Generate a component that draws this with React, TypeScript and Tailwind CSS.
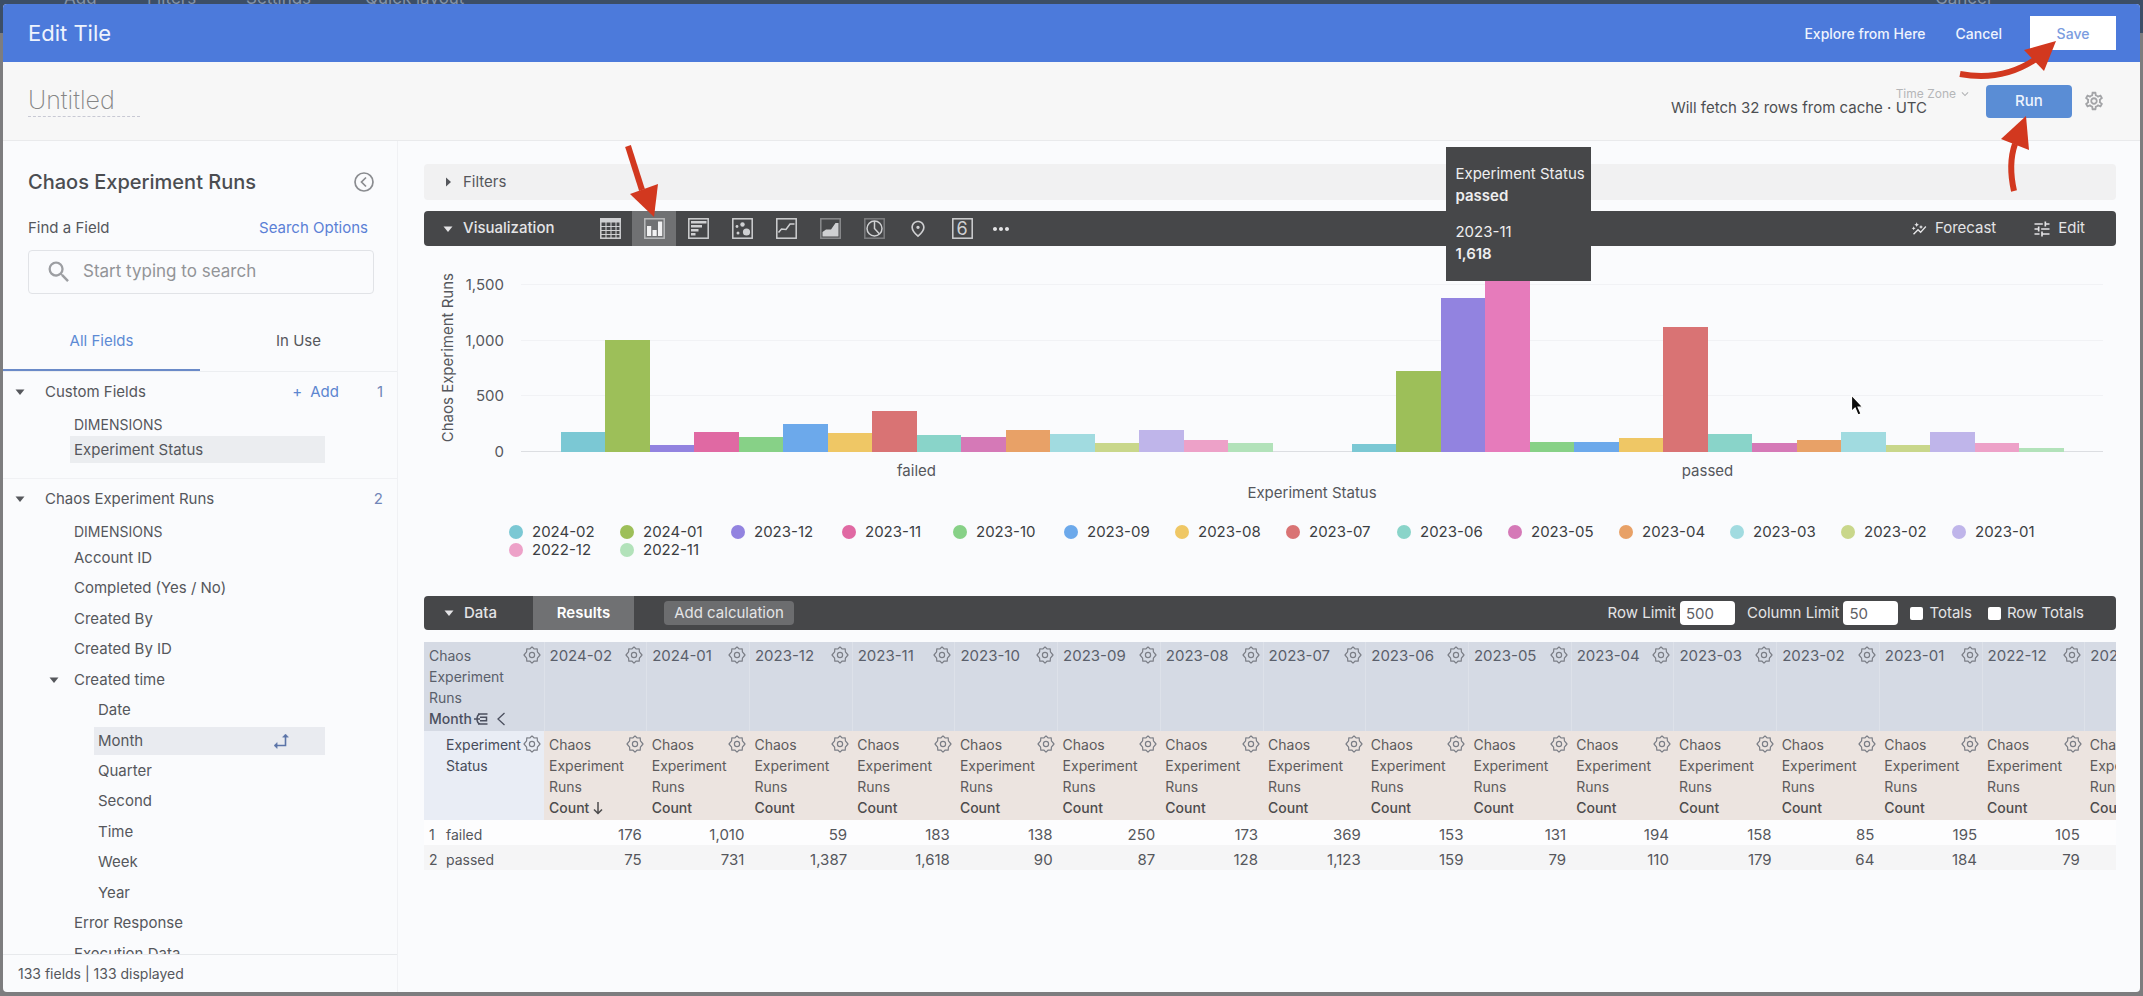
import React, { useState } from "react";
import { MdAutoGraph, MdExpandMore, MdMoreHoriz, MdOutlinePlace, MdOutlineSettings, MdSearch, MdTune } from "react-icons/md";

const months = [
  { label: "2024-02", color: "#7bc8d4", failed: 176, passed: 75 },
  { label: "2024-01", color: "#9dbf59", failed: 1010, passed: 731 },
  { label: "2023-12", color: "#9283e0", failed: 59, passed: 1387 },
  { label: "2023-11", color: "#e069a3", failed: 183, passed: 1618 },
  { label: "2023-10", color: "#87d187", failed: 138, passed: 90 },
  { label: "2023-09", color: "#6ca9eb", failed: 250, passed: 87 },
  { label: "2023-08", color: "#efc765", failed: 173, passed: 128 },
  { label: "2023-07", color: "#d97374", failed: 369, passed: 1123 },
  { label: "2023-06", color: "#89d4c9", failed: 153, passed: 159 },
  { label: "2023-05", color: "#d579b7", failed: 131, passed: 79 },
  { label: "2023-04", color: "#e8a167", failed: 194, passed: 110 },
  { label: "2023-03", color: "#a1dbe0", failed: 158, passed: 179 },
  { label: "2023-02", color: "#c9d78b", failed: 85, passed: 64 },
  { label: "2023-01", color: "#bfb5ea", failed: 195, passed: 184 },
  { label: "2022-12", color: "#eda1c8", failed: 105, passed: 79 },
  { label: "2022-11", color: "#b2e2ba", failed: 80, passed: 32 },
];

const statuses = ["failed", "passed"] as const;
const ticks = [1500, 1000, 500, 0];
const CHART_MAX = 1800;

const fields = [
  { name: "Account ID" },
  { name: "Completed (Yes / No)" },
  { name: "Created By" },
  { name: "Created By ID" },
  { name: "Created time", group: true },
  { name: "Date", nested: true },
  { name: "Month", nested: true, pivot: true },
  { name: "Quarter", nested: true },
  { name: "Second", nested: true },
  { name: "Time", nested: true },
  { name: "Week", nested: true },
  { name: "Year", nested: true },
  { name: "Error Response" },
  { name: "Execution Data" },
];

function Caret({ right = false }: { right?: boolean }) {
  return (
    <svg viewBox="0 0 10 10" className="w-2.5 h-2.5 shrink-0" fill="currentColor">
      {right ? <path d="M3 0.5 8 5 3 9.5z" /> : <path d="M0.5 2.5h9L5 8z" />}
    </svg>
  );
}

function Gear() {
  return (
    <svg viewBox="0 0 18 18" className="w-[18px] h-[18px]" fill="none" stroke="currentColor" strokeWidth="1.2" strokeLinejoin="round">
      <path d="M9 0.9 11.2 3l3-.2.2 3L17 9l-2.6 3.2-.2 3-3-.2L9 17.1 6.8 15l-3 .2-.2-3L1 9l2.6-3.2.2-3 3 .2z" />
      <circle cx="9" cy="9" r="2.6" />
    </svg>
  );
}

function GearButton({ label }: { label: string }) {
  return (
    <button aria-label={label} className="absolute right-[3px] top-1 text-[#7b7e86]">
      <Gear />
    </button>
  );
}

function PivotIcon() {
  return (
    <svg viewBox="0 0 16 16" className="w-4 h-4" fill="none" stroke="#5b74a8" strokeWidth="1.6">
      <path d="M12.5 2v10.5H2" />
      <path d="M9.5 4.2 12.5 1l3 3.2zM4.2 9.5 1 12.5l3.2 3z" fill="#5b74a8" strokeWidth="0.4" />
    </svg>
  );
}

const frame = <rect x="0.8" y="0.8" width="19.4" height="19.4" />;

const vizTypes = [
  {
    name: "Table",
    icon: (
      <>
        {frame}
        <path d="M0 0h21v4.5H0z" fill="currentColor" stroke="none" />
        <path d="M1 8.5h19M1 12.5h19M1 16.5h19M6 4v16M11 4v16M16 4v16" strokeWidth="1.1" />
      </>
    ),
  },
  {
    name: "Column",
    icon: (
      <>
        {frame}
        <path d="M3 8h4.2v10H3zM8.500 12h4.2v6H8.500zM14 3.500h4.2V18H14z" fill="#f1f1f2" stroke="none" />
      </>
    ),
  },
  {
    name: "Bar",
    icon: (
      <>
        {frame}
        <path d="M3 3h15.5v2.4H3zM3 7h11v2.4H3zM3 11h7.5v2.4H3zM3 15h4.5v2.4H3z" fill="currentColor" stroke="none" />
      </>
    ),
  },
  {
    name: "Scatterplot",
    icon: (
      <>
        {frame}
        <g fill="currentColor" stroke="none">
          <circle cx="10.5" cy="6.5" r="2.2" />
          <circle cx="5" cy="8.5" r="1.4" />
          <circle cx="6" cy="15" r="1.5" />
          <circle cx="14.5" cy="14" r="3.6" />
        </g>
      </>
    ),
  },
  {
    name: "Line",
    icon: (
      <>
        {frame}
        <path d="M2.5 14.5 5.5 11l4.5.5 4-5.5h4.500" />
      </>
    ),
  },
  {
    name: "Area",
    icon: (
      <>
        <rect x="0.8" y="0.8" width="19.4" height="19.4" opacity="0.5" />
        <path d="M2.5 18.5V14L6 11.5h5L15.500 5h3v13.500z" fill="currentColor" stroke="none" />
      </>
    ),
  },
  {
    name: "Pie",
    icon: (
      <>
        <rect x="0.8" y="0.8" width="19.4" height="19.4" opacity="0.4" />
        <circle cx="10.5" cy="10.5" r="7.5" />
        <path d="M10.5 3v7.5l5 5.5" />
      </>
    ),
  },
  { name: "Map", icon: null },
  { name: "Single Value", icon: frame },
];

function FieldPicker() {
  const [tab, setTab] = useState("All Fields");

  return (
    <aside className="w-[395px] shrink-0 flex flex-col border-r border-[#f0f1f4] min-h-0">
      <div className="pl-[25px] pr-[23px] pt-[23px]">
        <div className="flex items-center justify-between h-9">
          <h2 className="text-[20px] font-medium text-[#4b4d51]">Chaos Experiment Runs</h2>
          <button aria-label="Collapse field picker" className="text-[#8a8c90]">
            <svg viewBox="0 0 20 20" className="w-5 h-5" fill="none" stroke="currentColor" strokeWidth="1.7">
              <circle cx="10" cy="10" r="9" />
              <path d="M12 5.5 7.5 10l4.5 4.5" />
            </svg>
          </button>
        </div>
        <div className="flex items-center justify-between mt-3.5 pr-1.5 h-7">
          <label htmlFor="field-search">Find a Field</label>
          <a href="#search-options" className="text-[#5b80d6]">Search Options</a>
        </div>
        <div className="mt-2 flex items-center h-11 border border-[#e1e3e7] rounded px-4">
          <MdSearch className="w-7 h-7 text-[#9c9ea2] shrink-0" />
          <input
            id="field-search"
            placeholder="Start typing to search"
            className="ml-2.5 w-full bg-transparent text-[17px] placeholder:text-[#929497] outline-none"
          />
        </div>
      </div>

      <div className="mt-5 flex border-b border-[#eceef1]">
        {["All Fields", "In Use"].map((name) => (
          <button
            key={name}
            onClick={() => setTab(name)}
            className={
              tab === name
                ? "flex-1 h-[57px] border-b-2 border-[#6a8ac8] text-[#5d8ad4]"
                : "flex-1 h-[57px] border-b-2 border-transparent"
            }
          >
            {name}
          </button>
        ))}
      </div>

      <div className="flex-1 min-h-0 overflow-hidden">
        <section className="h-[107px] border-b border-[#f0f1f4]">
          <div className="flex items-center h-10 pl-3 pr-3.5">
            <Caret />
            <h3 className="ml-5 flex-1">Custom Fields</h3>
            <button className="flex gap-2 text-[#5d86d0] mr-[38px]">
              <span>+</span>
              Add
            </button>
            <span className="text-[#7186b8]">1</span>
          </div>
          <p className="pl-[71px] h-[22px] leading-[22px] mt-0.5 text-[14px]">DIMENSIONS</p>
          <div className="ml-[67px] mr-[72px] h-[27px] leading-[27px] pl-1 bg-[#ebedf0]">Experiment Status</div>
        </section>

        <section>
          <div className="flex items-center h-10 pl-3 pr-3.5">
            <Caret />
            <h3 className="ml-5 flex-1">Chaos Experiment Runs</h3>
            <span className="text-[#7186b8]">2</span>
          </div>
          <p className="pl-[71px] h-[22px] leading-[22px] mt-0.5 text-[14px]">DIMENSIONS</p>
          <ul className="grid auto-rows-fr h-[426px] items-center">
            {fields.map((field) => (
              <li
                key={field.name}
                className={
                  field.pivot
                    ? "ml-[91px] mr-[72px] pl-1 pr-9 h-7 flex items-center justify-between bg-[#e9ebf0]"
                    : field.nested
                    ? "pl-[95px]"
                    : field.group
                    ? "pl-[46px] flex items-center gap-[15px]"
                    : "pl-[71px]"
                }
              >
                {field.group && <Caret />}
                {field.name}
                {field.pivot && <PivotIcon />}
              </li>
            ))}
          </ul>
        </section>
      </div>

      <div className="h-[38px] leading-[38px] pl-[15px] text-[14px] border-t border-[#e7e9ec]">133 fields | 133 displayed</div>
    </aside>
  );
}

function Chart() {
  return (
    <div className="flex flex-col h-[350px]">
      <div className="flex h-[206px] pt-[6px]">
        <div className="w-12 flex items-end justify-center">
          <span className="[writing-mode:vertical-rl] rotate-180 mb-2.5">Chaos Experiment Runs</span>
        </div>
        <div className="relative w-8">
          {ticks.map((tick) => (
            <span
              key={tick}
              className="absolute right-0 translate-y-1/2 leading-5"
              style={{ bottom: `${(tick / CHART_MAX) * 100}%` }}
            >
              {tick.toLocaleString("en-US")}
            </span>
          ))}
        </div>
        <div className="relative flex-1 ml-[17px] mr-[13px] flex">
          {ticks.map((tick) => (
            <div
              key={tick}
              className={tick ? "absolute inset-x-0 border-t border-[#f1f2f5]" : "absolute inset-x-0 border-t border-[#dcdee2]"}
              style={{ bottom: `${(tick / CHART_MAX) * 100}%` }}
            />
          ))}
          {statuses.map((status) => (
            <div key={status} className="relative flex-1 px-[2.5%] flex items-end">
              {months.map((month) => (
                <div
                  key={month.label}
                  className="flex-1"
                  style={{
                    height: `${(month[status] / CHART_MAX) * 100}%`,
                    backgroundColor: status === "passed" && month.label === "2023-11" ? "#e67bbb" : month.color,
                  }}
                />
              ))}
            </div>
          ))}

          <div role="tooltip" className="absolute left-[58.5%] bottom-[171px] w-[145px] h-[134px] pt-4 px-[9px] bg-[#464749] text-[#eeeeef] leading-[22px] whitespace-nowrap z-10">
            <p>Experiment Status</p>
            <p className="font-semibold">passed</p>
            <p className="mt-3.5">2023-11</p>
            <p className="font-semibold">1,618</p>
          </div>

          <svg viewBox="0 0 14 22" className="absolute left-[84%] bottom-[36px] w-3.5 h-[22px]" fill="#0c0c0c" stroke="#fff" strokeWidth="1.2">
            <path d="M1.5 1v16.5l3.6-3.4L8 21l3-1.2-2.9-6.6h4.7z" />
          </svg>
        </div>
      </div>

      <div className="flex ml-[97px] mr-[13px] mt-[9px] leading-5">
        {statuses.map((status) => (
          <span key={status} className="flex-1 text-center">{status}</span>
        ))}
      </div>
      <p className="ml-[97px] mr-[13px] text-center mt-0.5 leading-5">Experiment Status</p>

      <ul className="grid grid-cols-[repeat(auto-fill,111px)] ml-[85px] mt-5 leading-[18px] text-[#3c3e42]">
        {months.map((month) => (
          <li key={month.label} className="flex items-center gap-[9px]">
            <span className="w-3.5 h-3.5 rounded-full" style={{ backgroundColor: month.color }} />
            {month.label}
          </li>
        ))}
      </ul>
    </div>
  );
}

function ResultsTable() {
  return (
    <div className="mt-3 overflow-hidden">
      <table className="w-[1764px] table-fixed text-left leading-[21px] text-[14px]">
        <thead className="align-top">
          <tr className="h-[89px] bg-[#d5dae4] text-[#5a5f6b]">
            <th className="relative w-[120px] px-[5px] pt-[3px] font-normal border-r border-[#dde1e9]">
              Chaos<br />Experiment<br />Runs
              <span className="flex items-center font-medium text-[#4b4f5e]">
                Month
                <svg viewBox="0 0 14 14" className="w-3.5 h-3.5 ml-0.5" fill="none" stroke="currentColor" strokeWidth="1.5">
                  <path d="M4 2h9.500M6 5.300h6.500v3.400H6M4 12h9.500M6 2Q3 3 3 7t3 5M0 7h6" />
                </svg>
                <svg viewBox="0 0 10 14" className="w-2.5 h-3.5 ml-2" fill="none" stroke="currentColor" strokeWidth="1.3">
                  <path d="M8.5 1 2 7l6.5 6" />
                </svg>
              </span>
              <GearButton label="Month options" />
            </th>
            {months.map((month) => (
              <th key={month.label} className="relative px-[5px] pt-[3px] font-normal text-[15px] border-r border-[#dde1e9]">
                {month.label}
                <GearButton label={`${month.label} options`} />
              </th>
            ))}
          </tr>
          <tr className="h-[89px] bg-[#ece4e0] text-[#5d5b5c]">
            <th className="relative pl-[22px] pt-[3px] font-normal bg-[#e9edf5] text-[#474c5a]">
              Experiment<br />Status
              <GearButton label="Experiment Status options" />
            </th>
            {months.map((month, index) => (
              <th key={month.label} className="relative px-[5px] pt-[3px] font-normal">
                Chaos<br />Experiment<br />Runs<br />
                <span className="flex items-center font-medium text-[#4c4b4c]">
                  Count
                  {index === 0 && (
                    <svg viewBox="0 0 10 14" className="w-2.5 h-3.5 ml-1" fill="none" stroke="currentColor" strokeWidth="1.5">
                      <path d="M5 1v11M1 8.5l4 4 4-4" />
                    </svg>
                  )}
                </span>
                <GearButton label={`${month.label} count options`} />
              </th>
            ))}
          </tr>
        </thead>
        <tbody>
          {statuses.map((status, row) => (
            <tr key={status} className="h-[25px] odd:bg-[#fdfdfe] even:bg-[#f5f5f6]">
              <td className="pl-[5px] pt-[3px]">
                <span className="inline-block w-[17px]">{row + 1}</span>
                {status}
              </td>
              {months.map((month) => (
                <td key={month.label} className="pr-[5px] pt-[3px] text-right text-[15px]">
                  {month[status].toLocaleString("en-US")}
                </td>
              ))}
            </tr>
          ))}
        </tbody>
      </table>
    </div>
  );
}

export default function App() {
  return (
    <div className="relative h-screen overflow-hidden bg-[#7d7d7f] text-[15px] text-[#55575c] font-['Inter',sans-serif]">
      {/* dimmed dashboard toolbar behind the dialog */}
      <div className="absolute inset-x-0 top-0 h-[33px] bg-[#3c4e66] text-[#8593a5]" aria-hidden="true">
        <div className="-mt-2.5 pl-16 pr-[152px] flex leading-4 text-[17px]">
          <span className="w-[83px]">Add</span>
          <span className="w-[99px]">Filters</span>
          <span className="w-[119px]">Settings</span>
          <span className="flex-1">Quick layout</span>
          <span>Cancel</span>
        </div>
      </div>

      <div role="dialog" aria-label="Edit Tile" className="absolute inset-x-[3px] top-1 bottom-1 rounded overflow-hidden bg-[#fafbfd] flex flex-col">
        <header className="flex items-center h-[58px] pl-[25px] pr-6 bg-[#4c7adb] text-[#eef3fd] shrink-0">
          <h1 className="text-[22px] flex-1">Edit Tile</h1>
          <a href="#explore" className="text-[14px] font-medium">Explore from Here</a>
          <button className="ml-[30px] text-[14px] font-medium">Cancel</button>
          <div className="relative ml-7">
            <button className="w-[86px] h-[34px] bg-white text-[#7b9ce0] text-[14px] font-medium">Save</button>
            <svg viewBox="0 0 100 42" className="absolute right-[58px] top-[23px] w-[100px] h-[42px] z-20" fill="none">
              <path d="M2 35q42 8 76-15" stroke="#d2381f" strokeWidth="6" />
              <path d="M98 2 66 11l20 21z" fill="#d2381f" />
            </svg>
          </div>
        </header>

        <div className="flex items-center h-[79px] pl-[25px] pr-[35px] bg-[#f7f7f7] border-b border-[#e9eaec] shrink-0">
          <input
            aria-label="Tile title"
            placeholder="Untitled"
            className="w-28 h-8 text-[25px] font-extralight bg-transparent border-b border-dashed border-[#c8c9d4] placeholder:text-[#858585] outline-none"
          />
          <div className="ml-auto flex items-end leading-[14px] text-[#4d4f52]">
            <span>Will fetch 32 rows from cache ·&nbsp;</span>
            <button className="flex flex-col items-start">
              <span className="flex items-center text-[12px] text-[#b5b6b8]">
                Time Zone <MdExpandMore className="w-3.5 h-3.5 ml-0.5" />
              </span>
              UTC
            </button>
          </div>
          <div className="relative ml-3.5">
            <button className="w-[86px] h-[33px] rounded-sm bg-[#5a8dd5] text-[#eef4fd] font-medium">Run</button>
            <svg viewBox="0 0 32 76" className="absolute left-[14px] top-[31px] w-8 h-[76px] z-20" fill="none">
              <path d="M14 75Q8 48 15 28" stroke="#d2381f" strokeWidth="6" />
              <path d="M26 0 1 23l28 11z" fill="#d2381f" />
            </svg>
          </div>
          <button aria-label="Explore settings" className="ml-[11px] text-[#a3a4a7]">
            <MdOutlineSettings className="w-[22px] h-[22px]" />
          </button>
        </div>

        <div className="flex flex-1 min-h-0">
          <FieldPicker />

          <main className="flex-1 min-w-0 pt-[23px] pl-[26px] pr-6">
            <button className="flex items-center w-full h-9 pl-[19px] gap-2.5 bg-[#f1f1f2] rounded-sm">
              <Caret right />
              Filters
            </button>

            <div className="mt-[11px] flex items-center h-[35px] pl-[19px] rounded-sm bg-[#464749] text-[#e4e4e6]">
              <button className="flex items-center gap-2.5 w-[145px] font-medium">
                <Caret />
                Visualization
              </button>
              {vizTypes.map((viz) => (
                <button
                  key={viz.name}
                  aria-label={viz.name}
                  className={
                    viz.name === "Column"
                      ? "relative w-11 h-[35px] flex items-center justify-center bg-[#707173] text-[#b9babc]"
                      : "relative w-11 h-[35px] flex items-center justify-center text-[#cfd0d2]"
                  }
                >
                  {viz.icon ? (
                    <svg viewBox="0 0 21 21" className="w-[21px] h-[21px]" fill="none" stroke="currentColor" strokeWidth="1.5">
                      {viz.icon}
                    </svg>
                  ) : (
                    <MdOutlinePlace className="w-5 h-5" />
                  )}
                  {viz.name === "Single Value" && (
                    <span className="absolute inset-0 flex items-center justify-center text-[18px]">6</span>
                  )}
                  {viz.name === "Column" && (
                    <svg viewBox="0 0 34 74" className="absolute left-[-8px] top-[-67px] w-[34px] h-[74px] z-20" fill="none">
                      <path d="M4 2 18 46" stroke="#d2381f" strokeWidth="6" />
                      <path d="M30 73 6 50l28-10z" fill="#d2381f" />
                    </svg>
                  )}
                </button>
              ))}
              <button aria-label="More visualizations" className="w-[34px] flex justify-center">
                <MdMoreHoriz className="w-6 h-6" />
              </button>
              <button className="ml-auto flex items-center gap-2">
                <MdAutoGraph className="w-4 h-4" />
                Forecast
              </button>
              <button className="ml-9 mr-[31px] flex items-center gap-1.5">
                <MdTune className="w-5 h-5" />
                Edit
              </button>
            </div>

            <Chart />

            <div className="flex items-center h-[34px] pl-5 pr-8 rounded-sm bg-[#464749] text-[#e4e4e6]">
              <button className="flex items-center gap-2.5 w-[89px] font-medium">
                <Caret />
                Data
              </button>
              <button className="w-[101px] h-full bg-[#707173] font-semibold text-white">Results</button>
              <button className="ml-[30px] w-[130px] h-6 rounded-sm bg-[#6c6d6f]">Add calculation</button>
              <label htmlFor="row-limit" className="ml-auto">Row Limit</label>
              <input id="row-limit" defaultValue="500" className="ml-1 w-[55px] h-6 pl-1.5 rounded-sm bg-white text-[#5e6064]" />
              <label htmlFor="column-limit" className="ml-3">Column Limit</label>
              <input id="column-limit" defaultValue="50" className="ml-1 w-[55px] h-6 pl-1.5 rounded-sm bg-white text-[#5e6064]" />
              <input id="totals" type="checkbox" className="ml-3 w-[13px] h-[13px] appearance-none bg-white rounded-xs checked:bg-[#5a8dd5]" />
              <label htmlFor="totals" className="ml-1.5">Totals</label>
              <input id="row-totals" type="checkbox" className="ml-4 w-[13px] h-[13px] appearance-none bg-white rounded-xs checked:bg-[#5a8dd5]" />
              <label htmlFor="row-totals" className="ml-1.5">Row Totals</label>
            </div>

            <ResultsTable />
          </main>
        </div>
      </div>
    </div>
  );
}
